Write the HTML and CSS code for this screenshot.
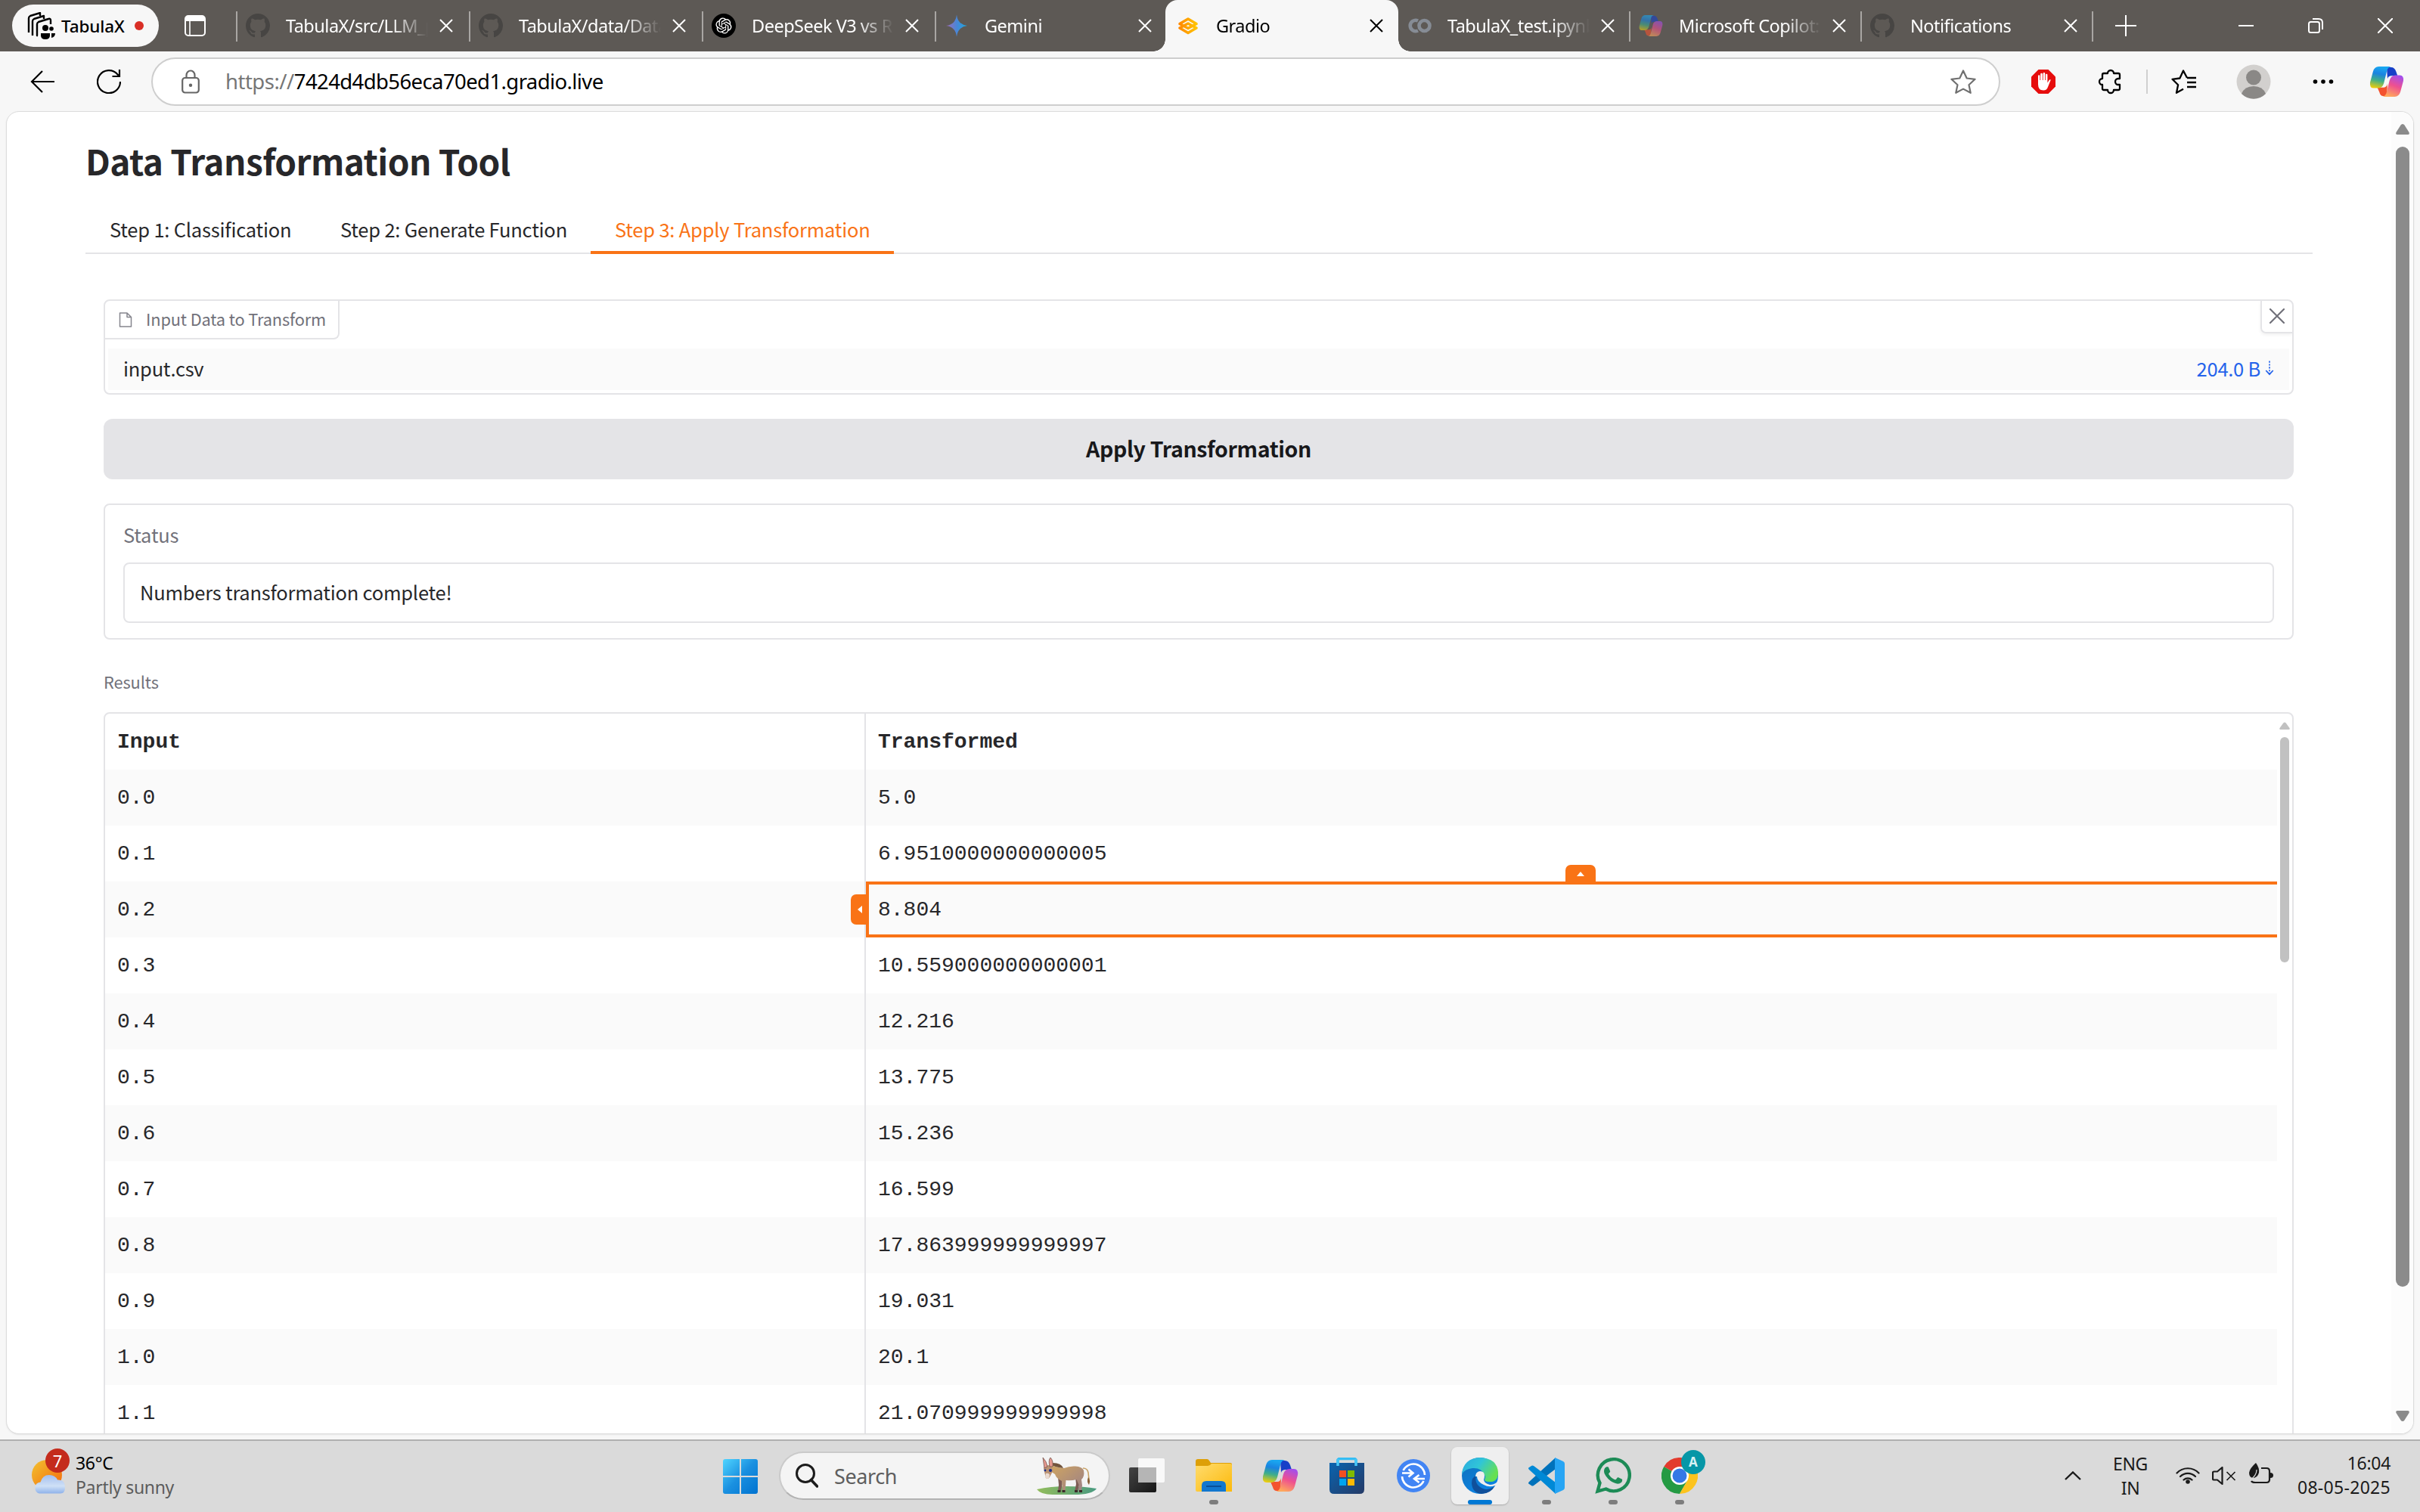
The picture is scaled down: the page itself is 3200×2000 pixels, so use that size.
FILE: index.html
```html
<!DOCTYPE html>
<html lang="en">
<head>
<meta charset="utf-8">
<title>Gradio</title>
<link rel="stylesheet" href="styles.css">
</head>
<body>
<svg class="defs" width="0" height="0" aria-hidden="true">
  <defs>
    <linearGradient id="cpBlue" x1="0.3" y1="0" x2="0.1" y2="1"><stop offset="0" stop-color="#19a6f0"/><stop offset=".3" stop-color="#1a83e0"/><stop offset=".6" stop-color="#3fae8a"/><stop offset="1" stop-color="#ffd000"/></linearGradient>
    <linearGradient id="cpPink" x1="0.8" y1="0" x2="0.4" y2="1"><stop offset="0" stop-color="#a04ef0"/><stop offset=".5" stop-color="#ee5090"/><stop offset="1" stop-color="#ffa85c"/></linearGradient>
    <linearGradient id="winG" x1="0" y1="0" x2="1" y2="1"><stop offset="0" stop-color="#4fd5ff"/><stop offset=".5" stop-color="#1a90e0"/><stop offset="1" stop-color="#0072d0"/></linearGradient>
    <linearGradient id="gemG"><stop offset="0" stop-color="#a06bb8"/><stop offset=".5" stop-color="#4a86d6"/><stop offset="1" stop-color="#1ba8de"/></linearGradient>
    <linearGradient id="sunG" x1="0" y1="0" x2="1" y2="1"><stop offset="0" stop-color="#f2c230"/><stop offset="1" stop-color="#f4670c"/></linearGradient>
    <linearGradient id="cloudG" x1="0" y1="0" x2="0" y2="1"><stop offset="0" stop-color="#a3bff0"/><stop offset=".6" stop-color="#cfe0f6"/><stop offset="1" stop-color="#8fb2ea"/></linearGradient>
    <linearGradient id="foldG" x1="0" y1="0" x2="1" y2="1"><stop offset="0" stop-color="#ffdc6e"/><stop offset="1" stop-color="#fcb90a"/></linearGradient>
    <linearGradient id="storeG" x1="0" y1="0" x2="1" y2="1"><stop offset="0" stop-color="#0a64b0"/><stop offset="1" stop-color="#253a66"/></linearGradient>
    <linearGradient id="edgeTop" x1="0" y1="0" x2="1" y2=".5"><stop offset="0" stop-color="#2aa8e0"/><stop offset=".5" stop-color="#30c5d8"/><stop offset="1" stop-color="#66e052"/></linearGradient>
    <linearGradient id="edgeL" x1="0" y1="0" x2=".6" y2="1"><stop offset="0" stop-color="#1070b8"/><stop offset="1" stop-color="#0c83e4"/></linearGradient>
    <linearGradient id="donk" x1="0" y1="0" x2="1" y2="1"><stop offset="0" stop-color="#d0a560"/><stop offset="1" stop-color="#9b8088"/></linearGradient>
    <linearGradient id="grass"><stop offset="0" stop-color="#93bd5c"/><stop offset="1" stop-color="#4a9a80"/></linearGradient>
    <linearGradient id="darkG" x1="0" y1="0" x2="1" y2="1"><stop offset="0" stop-color="#444"/><stop offset="1" stop-color="#161616"/></linearGradient>
    <linearGradient id="gradG"><stop offset="0" stop-color="#ff8a00"/><stop offset="1" stop-color="#ffc400"/></linearGradient>
  </defs>
  <symbol id="i-x" viewBox="0 0 18 18"><path d="M1 1l16 16M17 1L1 17" fill="none" stroke="currentColor" stroke-width="2"/></symbol>
  <symbol id="i-github" viewBox="0 0 16 16"><path fill="currentColor" d="M8 0C3.58 0 0 3.58 0 8c0 3.54 2.29 6.53 5.47 7.59.4.07.55-.17.55-.38 0-.19-.01-.82-.01-1.49-2.01.37-2.53-.49-2.69-.94-.09-.23-.48-.94-.82-1.13-.28-.15-.68-.52-.01-.53.63-.01 1.08.58 1.23.82.72 1.21 1.87.87 2.33.66.07-.52.28-.87.51-1.07-1.78-.2-3.64-.89-3.64-3.95 0-.87.31-1.59.82-2.15-.08-.2-.36-1.02.08-2.12 0 0 .67-.21 2.2.82.64-.18 1.32-.27 2-.27s1.36.09 2 .27c1.53-1.04 2.2-.82 2.2-.82.44 1.1.16 1.92.08 2.12.51.56.82 1.27.82 2.15 0 3.07-1.87 3.75-3.65 3.95.29.25.54.73.54 1.48 0 1.07-.01 1.93-.01 2.2 0 .21.15.46.55.38A8 8 0 0 0 16 8c0-4.42-3.58-8-8-8z"/></symbol>
  <symbol id="i-copilot" viewBox="0 0 48 44">
    <path d="M24 2h6q5 0 7 6l2 6h-8q-5 0-6 4z" fill="#1740c8"/>
    <path d="M24 42h-5q-4 0-5-5l-3-7h9q4 0 5-5z" fill="#f4522e"/>
    <path d="M13 1h17q-5 1-6 7l-4 16q-2 7-8 7H6Q0 31 1 23L5 8Q7 1 13 1z" fill="url(#cpBlue)"/>
    <path d="M35 43H18q5-1 6-7l4-16q2-7 8-7h6q6 0 5 8l-4 15q-2 7-8 7z" fill="url(#cpPink)"/>
  </symbol>
</svg>

<div class="screen">
  <header class="strip">
    <div class="workspace">
      <svg width="38" height="36" viewBox="0 0 38 36"><g fill="none" stroke="#000" stroke-width="2.4" stroke-linejoin="round"><path d="M3 27V8q0-2 2-3l13-4v4"/><path d="M8 31V12q0-2 2-3l13-4v4"/><path d="M15 31h-1V16q0-2 2-3l13-4q3-1 3 2v5"/></g><g fill="#000"><circle cx="25" cy="21" r="4"/><circle cx="33" cy="22" r="2.8"/><path d="M19 28h12v3q0 5-6 5t-6-5zM33 28h5q0 5-5 6z"/></g></svg>
      <span class="ws-name">TabulaX</span><i class="dot"></i>
    </div>
    <svg class="tabact" width="28" height="28" viewBox="0 0 28 28"><rect x="1" y="1" width="26" height="26" rx="4" fill="none" stroke="#fff" stroke-width="2"/><path d="M1 8V5a4 4 0 0 1 4-4h18a4 4 0 0 1 4 4v3z" fill="#fff"/><path d="M7 8v19" stroke="#fff" stroke-width="1.6"/></svg>
    <nav class="tabs">
      <div class="tab"><svg class="fav dim" width="32" height="32"><use href="#i-github"/></svg><span class="tt">TabulaX/src/LLM_p</span><svg class="tx"><use href="#i-x"/></svg></div>
      <div class="tab"><svg class="fav dim" width="32" height="32"><use href="#i-github"/></svg><span class="tt">TabulaX/data/Data</span><svg class="tx"><use href="#i-x"/></svg></div>
      <div class="tab"><svg class="fav" width="32" height="32" viewBox="0 0 32 32"><circle cx="16" cy="16" r="16"/><path transform="translate(5.4 5.4) scale(.88)" fill="#fff" d="M22.2819 9.8211a5.9847 5.9847 0 0 0-.5157-4.9108 6.0462 6.0462 0 0 0-6.5098-2.9A6.0651 6.0651 0 0 0 4.9807 4.1818a5.9847 5.9847 0 0 0-3.9977 2.9 6.0462 6.0462 0 0 0 .7427 7.0966 5.98 5.98 0 0 0 .511 4.9107 6.051 6.051 0 0 0 6.5146 2.9001A5.9847 5.9847 0 0 0 13.2599 24a6.0557 6.0557 0 0 0 5.7718-4.2058 5.9894 5.9894 0 0 0 3.9977-2.9001 6.0557 6.0557 0 0 0-.7475-7.0729zm-9.022 12.6081a4.4755 4.4755 0 0 1-2.8764-1.0408l.1419-.0804 4.7783-2.7582a.7948.7948 0 0 0 .3927-.6813v-6.7369l2.02 1.1686a.071.071 0 0 1 .038.052v5.5826a4.504 4.504 0 0 1-4.4945 4.4944zm-9.6607-4.1254a4.4708 4.4708 0 0 1-.5346-3.0137l.142.0852 4.783 2.7582a.7712.7712 0 0 0 .7806 0l5.8428-3.3685v2.3324a.0804.0804 0 0 1-.0332.0615L9.74 19.9502a4.4992 4.4992 0 0 1-6.1408-1.6464zM2.3408 7.8956a4.485 4.485 0 0 1 2.3655-1.9728V11.6a.7664.7664 0 0 0 .3879.6765l5.8144 3.3543-2.0201 1.1685a.0757.0757 0 0 1-.071 0l-4.8303-2.7865A4.504 4.504 0 0 1 2.3408 7.872zm16.5963 3.8558L13.1038 8.364 15.1192 7.2a.0757.0757 0 0 1 .071 0l4.8303 2.7913a4.4944 4.4944 0 0 1-.6765 8.1042v-5.6772a.79.79 0 0 0-.407-.667zm2.0107-3.0231l-.142-.0852-4.7735-2.7818a.7759.7759 0 0 0-.7854 0L9.409 9.2297V6.8974a.0662.0662 0 0 1 .0284-.0615l4.8303-2.7866a4.4992 4.4992 0 0 1 6.6802 4.66zM8.3065 12.863l-2.02-1.1638a.0804.0804 0 0 1-.038-.0567V6.0742a4.4992 4.4992 0 0 1 7.3757-3.4537l-.142.0805L8.704 5.459a.7948.7948 0 0 0-.3927.6813zm1.0976-2.3654l2.602-1.4998 2.6069 1.4998v2.9994l-2.5974 1.4997-2.6067-1.4997Z"/></svg><span class="tt">DeepSeek V3 vs R1</span><svg class="tx"><use href="#i-x"/></svg></div>
      <div class="tab"><svg class="fav" width="32" height="32" viewBox="0 0 32 32"><path d="M16 1.500Q17.500 14.500 30 16Q17.500 17.500 16 30.500Q14.500 17.500 2 16Q14.500 14.500 16 1.500z" fill="url(#gemG)"/></svg><span class="tt">Gemini</span><svg class="tx"><use href="#i-x"/></svg></div>
      <div class="tab active"><svg class="fav" width="32" height="32" viewBox="0 0 32 32"><g fill="none" stroke="url(#gradG)" stroke-width="3.6" stroke-linejoin="round"><path d="M16 7l11 6.500-11 6-11-6z"/><path d="M16 13l11 6-11 6.500-11-6.500z"/></g></svg><span class="tt">Gradio</span><svg class="tx"><use href="#i-x"/></svg></div>
      <div class="tab nosep"><svg class="fav" width="32" height="32" viewBox="0 0 32 32"><g fill="none" stroke="#868c95" stroke-width="4.600"><path d="M14 9.500a7.200 7.200 0 1 0 0 13"/><circle cx="22.500" cy="16" r="7"/></g></svg><span class="tt">TabulaX_test.ipynb</span><svg class="tx"><use href="#i-x"/></svg></div>
      <div class="tab"><svg class="fav faded" width="32" height="30"><use href="#i-copilot"/></svg><span class="tt">Microsoft Copilot:</span><svg class="tx"><use href="#i-x"/></svg></div>
      <div class="tab last"><svg class="fav dim" width="32" height="32"><use href="#i-github"/></svg><span class="tt">Notifications</span><svg class="tx"><use href="#i-x"/></svg></div>
    </nav>
    <svg class="newtab" width="28" height="28" viewBox="0 0 28 28"><path d="M14 0v28M0 14h28" stroke="#fff" stroke-width="2"/></svg>
    <div class="winctl">
      <svg width="20" height="20" viewBox="0 0 20 20"><path d="M0 10h20" stroke="#fff" stroke-width="2"/></svg>
      <svg width="20" height="20" viewBox="0 0 20 20"><rect x="1" y="5" width="14" height="14" rx="2.500" fill="none" stroke="#fff" stroke-width="2"/><path d="M6 1h8q5 0 5 5v9" fill="none" stroke="#fff" stroke-width="2"/></svg>
      <svg width="20" height="20" viewBox="0 0 20 20"><path d="M0 0l20 20M20 0L0 20" stroke="#fff" stroke-width="2"/></svg>
    </div>
  </header>

  <div class="toolbar">
    <svg class="back" width="32" height="30" viewBox="0 0 32 30"><path d="M16 1L2 15l14 14M2 15h30" fill="none" stroke="#000" stroke-width="2.200"/></svg>
    <svg class="reload" width="32" height="32" viewBox="0 0 32 32"><path d="M31 16A15 15 0 1 1 27.500 6.500L30 9M30 0v9h-9.500" fill="none" stroke="#000" stroke-width="2.200"/></svg>
    <div class="address">
      <svg width="24" height="32" viewBox="0 0 24 32"><g fill="none" stroke="#666" stroke-width="2.200"><rect x="1.200" y="11" width="21.600" height="19.500" rx="3.500"/><path d="M6.500 11V7.500a5.500 6 0 0 1 11 0V11"/></g><circle cx="12" cy="20.700" r="2.200" fill="#666"/></svg>
      <span class="url"><span class="scheme">https://</span>7424d4db56eca70ed1.gradio.live</span>
      <svg class="star" width="34" height="32" viewBox="0 0 34 32"><path d="M17 1.500l4.700 10 10.900 1.300-8.100 7.400 2.200 10.600L17 25.600l-9.700 5.200 2.200-10.600-8.100-7.400L12.300 11.500z" fill="none" stroke="#707070" stroke-width="2.200" stroke-linejoin="round"/></svg>
    </div>
    <svg class="t-ab" width="32" height="32" viewBox="0 0 32 32"><path d="M9.500 0h13L32 9.500v13L22.500 32h-13L0 22.500v-13z" fill="#e60d0d"/><path d="M9 17V8.500q0-1.300 1.200-1.300t1.200 1.300V14h.8V6q0-1.300 1.300-1.300T14.800 6v8h.8V5.300q0-1.300 1.300-1.300t1.300 1.300V14h.8V7q0-1.300 1.200-1.300T21.400 7v10.500l2.200-3.600q1-1.300 2.200-.4L22 23q-1.500 4.500-6 4.500-7 0-7-8z" fill="#fff"/></svg>
    <svg class="t-pz" width="32" height="34" viewBox="0 0 32 34"><path d="M13 6a4 4 0 0 1 8 0h6q2 0 2 2v5h-2a4 4 0 0 0 0 8h2v5q0 2-2 2h-6a4 4 0 0 1-8 0H8q-2 0-2-2v-5a4 4 0 0 1 0-8V8q0-2 2-2z" fill="none" stroke="#000" stroke-width="2.300" stroke-linejoin="round"/></svg>
    <i class="t-sep"></i>
    <svg class="t-fv" width="34" height="32" viewBox="0 0 34 32"><path d="M21 11l-5-9.500-4.600 10L1.500 12.800l7.600 7.400L7 30.800l9-5" fill="none" stroke="#000" stroke-width="2.300" stroke-linejoin="round"/><path d="M21 11h12M21 17h12M21 23h12" stroke="#000" stroke-width="2.300"/></svg>
    <svg class="t-av" width="46" height="46" viewBox="0 0 46 46"><circle cx="23" cy="23" r="22.500" fill="#d2d0ce"/><circle cx="23" cy="17.500" r="10" fill="#8a8886"/><path d="M7 39q4-10 16-10t16 10a22.500 22.500 0 0 1-32 0z" fill="#8a8886"/></svg>
    <svg class="t-dt" width="28" height="8" viewBox="0 0 28 8"><circle cx="3.500" cy="4" r="2.800"/><circle cx="14" cy="4" r="2.800"/><circle cx="24.500" cy="4" r="2.800"/></svg>
    <svg class="t-cp" width="46" height="42"><use href="#i-copilot"/></svg>
  </div>

  <div class="frame">
    <main class="app">
      <h1>Data Transformation Tool</h1>
      <div class="steps">
        <div class="step s1">Step 1: Classification</div>
        <div class="step s2">Step 2: Generate Function</div>
        <div class="step s3 sel">Step 3: Apply Transformation</div>
      </div>
      <div class="panel">
        <section class="file">
          <div class="filehead">
            <div class="filelabel"><svg width="18" height="20" viewBox="0 0 18 20"><path d="M1.500 1h9.500l5.500 5.500V19h-15zM11 1v5.500h5.500" fill="none" stroke="#85858d" stroke-width="1.500" stroke-linejoin="round"/></svg><span>Input Data to Transform</span></div>
            <div class="fileclose"><svg width="20" height="20" viewBox="0 0 20 20"><path d="M1 1l18 18M19 1L1 19" stroke="#71717a" stroke-width="2.200" stroke-linecap="round"/></svg></div>
          </div>
          <div class="filerow"><span>input.csv</span><span class="size">204.0 B<svg width="12" height="22" viewBox="0 0 14 22"><path d="M7 0v20" stroke="#2563eb" stroke-width="2" stroke-dasharray="2.500 2"/><path d="M1.500 14.500L7 20.500l5.500-6" fill="none" stroke="#2563eb" stroke-width="2"/></svg></span></div>
        </section>
        <div class="apply"><span>Apply Transformation</span></div>
        <section class="status"><div class="lbl">Status</div><div class="field"><span>Numbers transformation complete!</span></div></section>
        <div class="reslabel">Results</div>
        <section class="results">
          <table>
            <colgroup><col class="c1"><col></colgroup>
            <thead><tr><th>Input</th><th>Transformed</th></tr></thead>
            <tbody>
              <tr><td>0.0</td><td>5.0</td></tr>
              <tr><td>0.1</td><td>6.9510000000000005</td></tr>
              <tr><td>0.2</td><td class="picked">8.804<span class="handle up"><svg width="10" height="6" viewBox="0 0 10 6"><path d="M5 0l5 6H0z" fill="#fff"/></svg></span><span class="handle left"><svg width="6" height="10" viewBox="0 0 6 10"><path d="M6 0v10L0 5z" fill="#fff"/></svg></span></td></tr>
              <tr><td>0.3</td><td>10.559000000000001</td></tr>
              <tr><td>0.4</td><td>12.216</td></tr>
              <tr><td>0.5</td><td>13.775</td></tr>
              <tr><td>0.6</td><td>15.236</td></tr>
              <tr><td>0.7</td><td>16.599</td></tr>
              <tr><td>0.8</td><td>17.863999999999997</td></tr>
              <tr><td>0.9</td><td>19.031</td></tr>
              <tr><td>1.0</td><td>20.1</td></tr>
              <tr><td>1.1</td><td>21.070999999999998</td></tr>
            </tbody>
          </table>
          <div class="innerbar"><svg width="14" height="10" viewBox="0 0 14 10"><path d="M7 0.500q1 0 2 1.200L13.500 8q.8 2-1 2h-11q-1.800 0-1-2L5 1.700Q6 .5 7 .5z" fill="#c1c1c1"/></svg><i></i></div>
        </section>
      </div>
    </main>
    <div class="pagebar">
      <svg width="18" height="14" viewBox="0 0 18 14"><path d="M9 0q1.500 0 2.500 1.500L17.500 11q1 3-1.500 3H2Q-.5 14 .5 11L6.500 1.500Q7.500 0 9 0z" fill="#8b8b8b"/></svg>
      <i></i>
      <svg class="down" width="18" height="14" viewBox="0 0 18 14"><path d="M9 14q1.500 0 2.500-1.500L17.500 3Q18.500 0 16 0H2Q-.5 0 .5 3l6 9.500Q7.500 14 9 14z" fill="#8b8b8b"/></svg>
    </div>
  </div>

  <footer class="taskbar">
    <div class="weather">
      <svg width="50" height="50" viewBox="0 0 50 50"><circle cx="20" cy="22" r="20" fill="url(#sunG)"/><path d="M10 46.500a6.500 7 0 0 1-5.500-7.500q0-7 7-7.500Q14 22 23 22q8 0 11 6.500 10-1 10 10 0 8-6 8z" fill="url(#cloudG)"/></svg>
      <div class="badge">7</div>
      <div class="wtext"><div>36°C</div><div class="sub">Partly sunny</div></div>
    </div>
    <div class="apps">
      <svg class="win" width="46" height="46" viewBox="0 0 46 46"><path d="M3 0h19v22H0V3q0-3 3-3zM24 0h19q3 0 3 3v19H24zM0 24h22v22H3q-3 0-3-3zM24 24h22v19q0 3-3 3H24z" fill="url(#winG)"/></svg>
      <div class="search">
        <svg width="30" height="32" viewBox="0 0 30 32"><circle cx="13" cy="13" r="11.500" fill="none" stroke="#1c1c1c" stroke-width="3"/><path d="M20.500 21.500l8 8.500" stroke="#1c1c1c" stroke-width="3.600" stroke-linecap="round"/></svg>
        <span>Search</span>
        <svg class="donkey" width="82" height="52" viewBox="0 0 82 52">
          <path d="M1 43q18-4 40-4t39 3q-6 8-30 8H22Q6 50 1 43z" fill="url(#grass)"/>
          <path d="M29 27l1 10-1 9h3.500l2-9V27zM52 27l1 9-2 10h3.500l3-10V27z" fill="#7d5c54"/>
          <path d="M62 15q6 0 7 6l1 9" fill="none" stroke="#c7a265" stroke-width="1.600"/>
          <path d="M69 27q3.500 4 1 10-3.500-4-1-10z" fill="#8a6238"/>
          <path d="M20 11q7 3 17 4 7-3 15-2.500 9 .5 11 5.500 1.500 8-3 12l1 8-1.500 8h-3.500l.5-9-3-7q-7 2-14 1l-1 15H35l-1-14q-7-3-9-9l-6-4z" fill="url(#donk)"/>
          <path d="M19 8q14-1 17 7-10-1-18-5z" fill="#72543c"/>
          <path d="M10 15q2-4 8-4 4 2 4 8l-3 6q-2 4-4 4-3 0-3-5z" fill="#ba9273"/>
          <path d="M11 15L9 1q5 5 6 12zM18 13q-2-9 1-12 4 4 3 12z" fill="#e7988e" stroke="#74564c" stroke-width=".8"/>
          <path d="M13 22q4-1 5 2l-1 4q-4 3-5-2z" fill="#eadbd2"/><circle cx="19" cy="18" r="2" fill="#172c8c"/><circle cx="12" cy="18" r="1.400" fill="#172c8c"/>
          <path d="M28.500 44h4v3h-4zM34.500 44h4v3h-4zM51 44h4v3h-4zM57 44h4v3h-4z" fill="#3c2b2a"/>
        </svg>
      </div>
      <div class="cell"><svg width="48" height="46" viewBox="0 0 48 46"><rect x="0" y="12" width="36" height="33" rx="2" fill="url(#darkG)"/><rect x="12" y="0" width="35" height="32" rx="2" fill="#fdfdfd" opacity=".88"/><path d="M12 12h24v20H12z" fill="#b5b5b5"/></svg></div>
      <div class="cell"><svg width="48" height="46" viewBox="0 0 48 46"><path d="M0 4q0-3 3-3h12q2 0 3 2l2 3h26q2 0 2 2v6H0z" fill="#dd9f07"/><path d="M0 10h16q3 0 5-3h25q2 0 2 2v35H2q-2 0-2-2z" fill="url(#foldG)"/><path d="M8 44V36q0-6 6-6h20q6 0 6 6v8z" fill="#1277cf"/><path d="M14 37h20" stroke="#0a4f98" stroke-width="2"/></svg><i class="run"></i></div>
      <div class="cell"><svg width="48" height="44"><use href="#i-copilot"/></svg></div>
      <div class="cell"><svg width="46" height="48" viewBox="0 0 46 48"><path d="M11 11V4q0-2.500 2.500-2.500h19Q35 1.500 35 4v7" fill="none" stroke="#35bdf4" stroke-width="3.500"/><path d="M0 7h46v35q0 6-6 6H6q-6 0-6-6z" fill="url(#storeG)"/><path d="M11 2v9M35 2v9" stroke="#48c8f8" stroke-width="3.500"/><path fill="#f25022" d="M13 17h9v9h-9z"/><path fill="#7fba00" d="M24 17h9v9h-9z"/><path fill="#00a4ef" d="M13 28h9v9h-9z"/><path fill="#ffb900" d="M24 28h9v9h-9z"/></svg></div>
      <div class="cell"><svg width="44" height="44" viewBox="0 0 44 44"><circle cx="22" cy="22" r="22" fill="#4285f4"/><g fill="none" stroke="#fff" stroke-width="2.600"><path d="M8.500 15A15 15 0 0 1 37 21M35.500 29A15 15 0 0 1 7 23"/><path d="M7 18.500h14M15.500 13.500l6 5-6 5M37 26H24M29.500 21l-6.500 5 6.500 5"/></g></svg></div>
      <div class="cell on"><svg width="48" height="48" viewBox="0 0 48 48"><circle cx="24" cy="24" r="24" fill="url(#edgeL)"/><path d="M19 24q-3 12 9 17 8 3 16-4-6 11-18 11-12-1-13-14 0-8 6-10z" fill="#10509b"/><path d="M0 22Q2 1 24 0q23 1 24 20 0 13-12 12-6 0-6-3 2-3 0-6Q26 13 14 14 4 15 0 22z" fill="url(#edgeTop)"/><path d="M18 25q0-6 6-7 6 0 6 6 0 3-1 5 0 5 8 7 6 0 10-4 2-1 1 1-1 3-4 4-8 3-15-1-9-4-9-11z" fill="#efefef"/></svg><i class="run cur"></i></div>
      <div class="cell"><svg width="48" height="48" viewBox="0 0 48 48"><path d="M36 0L1 32q-2 2 0 3l3 2q1 1 3 0l29-22z" fill="#0072bb"/><path d="M36 48L1 16q-2-2 0-3l3-2q1-1 3 0l29 22z" fill="#0089d6"/><path d="M35 0l11 5q2 1 2 3v32q0 2-2 3l-11 5z" fill="#27a5f4"/></svg><i class="run"></i></div>
      <div class="cell"><svg width="48" height="48" viewBox="0 0 48 48"><path d="M3.500 44.500l3-11a21 21 0 1 1 8 8z" fill="none" stroke="#1d8b56" stroke-width="4.400"/><path transform="translate(0 -.5) scale(2)" fill="#1d8b56" d="M17.472 14.382c-.297-.149-1.758-.867-2.030-.967-.273-.099-.471-.148-.67.15-.197.297-.767.966-.94 1.164-.173.199-.347.223-.644.075-.297-.15-1.255-.463-2.390-1.475-.883-.788-1.480-1.761-1.653-2.059-.173-.297-.018-.458.13-.606.134-.133.298-.347.446-.52.149-.174.198-.298.298-.497.099-.198.05-.371-.025-.52-.075-.149-.669-1.612-.916-2.207-.242-.579-.487-.5-.669-.51-.173-.008-.371-.01-.57-.01-.198 0-.52.074-.792.372-.272.297-1.040 1.016-1.040 2.479 0 1.462 1.065 2.875 1.213 3.074.149.198 2.096 3.200 5.077 4.487.709.306 1.262.489 1.694.625.712.227 1.360.195 1.871.118.571-.085 1.758-.719 2.006-1.413.248-.694.248-1.289.173-1.413-.074-.124-.272-.198-.57-.347"/></svg><i class="run"></i></div>
      <div class="cell"><svg width="48" height="48" viewBox="0 0 48 48"><path d="M24 24L3.200 12A24 24 0 0 1 44.800 12z" fill="#e33b2e"/><path d="M24 24L3.200 12A24 24 0 0 0 24 48l10.400-18z" fill="#249a43"/><path d="M24 48l10.400-18L24 12h20.800A24 24 0 0 1 24 48z" fill="#fcc31e"/><circle cx="24" cy="24" r="12" fill="#fff"/><circle cx="24" cy="24" r="9.500" fill="#3578e5"/></svg><b class="pbadge">A</b><i class="run"></i></div>
    </div>
    <div class="tray">
      <svg class="chev" width="22" height="12" viewBox="0 0 22 12"><path d="M1 11L11 1.500 21 11" fill="none" stroke="#1a1a1a" stroke-width="2.400"/></svg>
      <div class="lang"><div>ENG</div><div>IN</div></div>
      <svg class="wifi" width="32" height="24" viewBox="0 0 32 24"><g fill="none" stroke="#1a1a1a" stroke-width="2.200" stroke-linecap="round"><path d="M1.500 9.500a20 20 0 0 1 29 0M6 14a14 14 0 0 1 20 0M10.500 18.500a8 8 0 0 1 11 0"/></g><circle cx="16" cy="21" r="2.800" fill="#1a1a1a"/></svg>
      <svg class="vol" width="32" height="24" viewBox="0 0 32 24"><path d="M1 8q0-1.500 1.500-1.500H7L13.500 1v22L7 17.500H2.500Q1 17.500 1 16z" fill="none" stroke="#1a1a1a" stroke-width="2.200" stroke-linejoin="round"/><path d="M19.500 7l11 11M30.500 7l-11 11" stroke="#1a1a1a" stroke-width="1.700"/></svg>
      <svg class="batt" width="34" height="28" viewBox="0 0 34 28"><path d="M10 0q5 7 4 13-2 7-8 7-5-1-5-7 1-6 9-13z" fill="#1a1a1a"/><path d="M11 9q0 8-9 14" fill="none" stroke="#dadada" stroke-width="1.200"/><path d="M17 7h7q4 0 4 4v11q0 4-4 4H9q-4 0-5-2" fill="none" stroke="#1a1a1a" stroke-width="2.200"/><path d="M29 13q4 0 4 3.500t-4 3.500z" fill="#1a1a1a"/></svg>
      <div class="clock"><div>16:04</div><div class="date">08-05-2025</div></div>
    </div>
  </footer>
</div>
</body>
</html>
```
FILE: styles.css
```css
* { box-sizing: border-box; }
html, body { margin: 0; padding: 0; }
body { width: 3200px; height: 2000px; overflow: hidden; font-family: "Noto Sans", "Open Sans", sans-serif; color: #000; }
svg { display: block; flex: none; }
.defs { position: absolute; }
.screen { width: 3200px; height: 2000px; display: flex; flex-direction: column; background: #f7f7f7; }

/* tab strip */
.strip { height: 68px; background: #5d5955; display: flex; align-items: center; flex: none; }
.workspace { margin-left: 16px; width: 194px; height: 56px; border-radius: 28px; background: #f7f7f7; display: flex; align-items: center; padding-left: 19px; }
.ws-name { margin-left: 8px; width: 86px; font-size: 22.5px; font-weight: 500; letter-spacing: -.1px; white-space: nowrap; }
.dot { width: 12px; height: 12px; border-radius: 50%; background: #d92f26; margin-left: 11px; }
.tabact { margin-left: 34px; }
.tabs { margin-left: 40px; height: 68px; display: grid; grid-template-columns: 308px 308px 308px 305px 308px 305px 306px 308px; color: #fff; }
.tab { display: flex; align-items: center; height: 68px; padding-left: 13px; background: linear-gradient(#a9a6a3, #a9a6a3) 0 15px / 2px 40px no-repeat; }
.tab.last { background: linear-gradient(#a9a6a3, #a9a6a3) 0 15px / 2px 40px no-repeat, linear-gradient(#a9a6a3, #a9a6a3) 100% 15px / 2px 40px no-repeat; }
.tab.nosep { background: none; padding-left: 12px; }
.tab.active { position: relative; background: #f7f7f7; color: #000; border-radius: 16px 16px 0 0; padding-left: 14px; }
.tab.active::before, .tab.active::after { content: ""; position: absolute; bottom: 0; width: 16px; height: 16px; }
.tab.active::before { left: -16px; background: radial-gradient(circle at 0 0, transparent 15.5px, #f7f7f7 16px); }
.tab.active::after { right: -16px; background: radial-gradient(circle at 100% 0, transparent 15.5px, #f7f7f7 16px); }
.fav.dim { color: #474543; }
.fav.faded { opacity: .6; }
.tt { margin-left: 21px; width: 188px; margin-right: 15px; font-size: 23.5px; letter-spacing: -.5px; white-space: nowrap; overflow: hidden; -webkit-mask-image: linear-gradient(90deg, #000 74%, transparent 100%); mask-image: linear-gradient(90deg, #000 74%, transparent 100%); line-height: 36px; flex: none; }
.tx { width: 18px; height: 18px; }
.newtab { margin-left: 29px; }
.winctl { margin-left: auto; margin-right: 36px; display: flex; gap: 72px; }

/* toolbar */
.toolbar { height: 79px; display: flex; align-items: center; padding-left: 40px; flex: none; }
.reload { margin-left: 56px; }
.address { margin-left: 40px; width: 2445px; height: 64px; border: 2px solid #cecece; border-radius: 32px; background: #fff; display: flex; align-items: center; padding: 0 30px 0 38px; }
.url { margin-left: 34px; font-size: 27.5px; letter-spacing: -.6px; white-space: nowrap; }
.scheme { color: #767676; letter-spacing: -.5px; }
.star { margin-left: auto; }
.t-ab { margin-left: 41px; }
.t-pz { margin-left: 56px; }
.t-sep { width: 2px; height: 32px; background: #d0d0d0; margin-left: 32px; }
.t-fv { margin-left: 31px; }
.t-av { margin-left: 52px; }
.t-dt { margin-left: 55px; }
.t-cp { margin-left: 47px; }

/* page */
.frame { margin: 0 8px 7px; height: 1750px; flex: none; border: 1px solid #dcdcdc; border-radius: 17px; background: #fff; display: flex; overflow: hidden; box-shadow: 0 1px 2px #e4e4e4; }
.app { width: 3153px; padding: 0 103px 0 104px; font-family: "Noto Sans CJK SC", sans-serif; color: #27272a; }
h1 { margin: 30px 0 0; font-size: 46px; line-height: 68px; font-weight: 700; letter-spacing: -.55px; white-space: nowrap; }
.steps { margin-top: 23px; height: 67px; display: flex; border-bottom: 2px solid #e4e4e7; width: 2945px; font-size: 25.5px; letter-spacing: -.2px; white-space: nowrap; }
.step { height: 67px; line-height: 68px; padding-left: 32px; }
.s1 { width: 304px; }
.s2 { width: 364px; padding-left: 33px; }
.s3 { width: 401px; }
.sel { color: #f97316; border-bottom: 4px solid #f97316; }
.panel { margin: 60px 0 0 24px; width: 2896px; }
.file { height: 126px; border: 2px solid #e4e4e7; border-radius: 8px; overflow: hidden; }
.filehead { height: 63px; display: flex; justify-content: space-between; align-items: flex-start; }
.filelabel { width: 310px; height: 51px; border: solid #e4e4e7; border-width: 0 2px 2px 0; border-bottom-right-radius: 8px; display: flex; align-items: center; padding-left: 18px; color: #71717a; font-size: 21.8px; letter-spacing: -.15px; white-space: nowrap; }
.filelabel span { margin: -2px 0 0 18px; }
.fileclose { width: 42px; height: 43px; border: solid #e4e4e7; border-width: 0 0 2px 2px; border-bottom-left-radius: 7px; box-shadow: 0 2px 4px rgba(0,0,0,.06); padding: 10px 0 0 10px; }
.filerow { margin: 0 4px; height: 55px; background: #fafafa; display: flex; align-items: center; justify-content: space-between; padding: 0 20px 4px 20px; font-size: 25.5px; letter-spacing: -.25px; }
.size { display: flex; align-items: center; color: #2563eb; gap: 6px; }
.apply { margin-top: 32px; height: 80px; border-radius: 12px; background: #e4e4e7; text-align: center; font-size: 28.5px; letter-spacing: -.35px; line-height: 77px; font-weight: 700; color: #18181b; }
.status { margin-top: 32px; height: 180px; border: 2px solid #e4e4e7; border-radius: 8px; padding: 20px 24px; }
.lbl { height: 56px; line-height: 37px; color: #71717a; font-size: 25.5px; letter-spacing: -.2px; }
.field { height: 80px; border: 2px solid #e4e4e7; border-radius: 8px; padding-left: 20px; line-height: 73px; font-size: 25.5px; letter-spacing: -.23px; }
.reslabel { margin-top: 36px; height: 60px; line-height: 39px; color: #71717a; font-size: 21.8px; letter-spacing: -.1px; }
.results { height: 980px; border: 2px solid #e4e4e7; border-radius: 8px; display: flex; align-items: flex-start; }
table { width: 2872px; table-layout: fixed; border-collapse: separate; border-spacing: 0; font-family: "Liberation Mono", monospace; font-size: 28px; }
.c1 { width: 1006px; }
th, td { height: 74px; padding: 1px 0 0 16px; text-align: left; line-height: 40px; }
th:first-child, td:first-child { border-right: 2px solid #e4e4e7; }
tbody tr:nth-child(odd) { background: #fafafa; }
.picked { position: relative; box-shadow: inset 4px 0 #f97316, inset 0 4px #f97316, inset 0 -4px #f97316; }
.handle { position: absolute; background: #f97316; display: flex; }
.up { left: 925px; top: -22px; width: 40px; height: 24px; border-radius: 7px 7px 0 0; padding: 9px 0 0 15px; }
.left { left: -20px; top: 17px; width: 23px; height: 40px; border-radius: 7px 0 0 7px; padding: 15px 0 0 9px; }
.innerbar { width: 20px; padding: 11px 0 0 3px; }
.innerbar i { display: block; width: 12px; height: 298px; border-radius: 6px; background: #c1c1c1; margin: 10px 0 0 1px; }
.pagebar { width: 29px; background: #fcfcfc; display: flex; flex-direction: column; padding: 16px 0 0 6px; }
.pagebar i { display: block; width: 18px; height: 1508px; border-radius: 9px; background: #8b8b8b; margin-top: 16px; }
.down { margin-top: 164px; }

/* taskbar */
.taskbar { height: 96px; background: #dadada; border-top: 2px solid #b0b0b0; display: flex; align-items: flex-start; flex: none; font-size: 23px; }
.weather { position: relative; width: 956px; padding: 23px 0 0 42px; display: flex; }
.badge { position: absolute; left: 60px; top: 10px; width: 32px; height: 32px; border-radius: 50%; background: #c42b1c; color: #fff; font-size: 22px; line-height: 32px; text-align: center; }
.wtext { margin: -10px 0 0 8px; line-height: 32px; white-space: nowrap; letter-spacing: -.3px; }
.wtext .sub { color: #5c5c5c; }
.apps { display: flex; height: 94px; }
.win { margin: 24px 28px 0 0; }
.search { width: 438px; height: 64px; margin: 14px 5px 0 0; border: 2px solid #cacaca; border-bottom-color: #b2b2b2; border-radius: 32px; background: #f4f4f4; display: flex; align-items: center; padding: 0 14px 0 20px; }
.search span { margin-left: 21px; font-size: 27px; letter-spacing: -.4px; color: #5e5e5e; }
.donkey { margin: 2px 0 0 auto; }
.cell { position: relative; width: 88px; height: 94px; display: flex; justify-content: center; align-items: center; padding-bottom: 2px; }
.cell.on::before { content: ""; position: absolute; left: 6px; top: 8px; width: 76px; height: 76px; border-radius: 8px; background: #efefef; box-shadow: 0 1px 2px #aaa; }
.cell svg { position: relative; }
.run { position: absolute; left: 38px; top: 78px; width: 12px; height: 6px; border-radius: 3px; background: #7d7d7d; }
.run.cur { left: 28px; width: 32px; background: #0078d4; }
.pbadge { position: absolute; left: 46px; top: 12px; width: 32px; height: 32px; border-radius: 50%; background: #0797a7; color: #d8f2f4; font-size: 17px; line-height: 32px; text-align: center; }
.tray { margin-left: auto; display: flex; padding-right: 39px; color: #1a1a1a; }
.chev { margin-top: 40px; }
.lang { margin: 14px 0 0 40px; width: 50px; text-align: center; line-height: 32px; letter-spacing: -.3px; }
.wifi { margin: 33px 0 0 35px; }
.vol { margin: 34px 0 0 16px; }
.batt { margin: 29px 0 0 16px; }
.clock { margin: 13px 0 0 20px; width: 134px; text-align: right; line-height: 32px; letter-spacing: -.3px; white-space: nowrap; }
.date { letter-spacing: .3px; }
```
